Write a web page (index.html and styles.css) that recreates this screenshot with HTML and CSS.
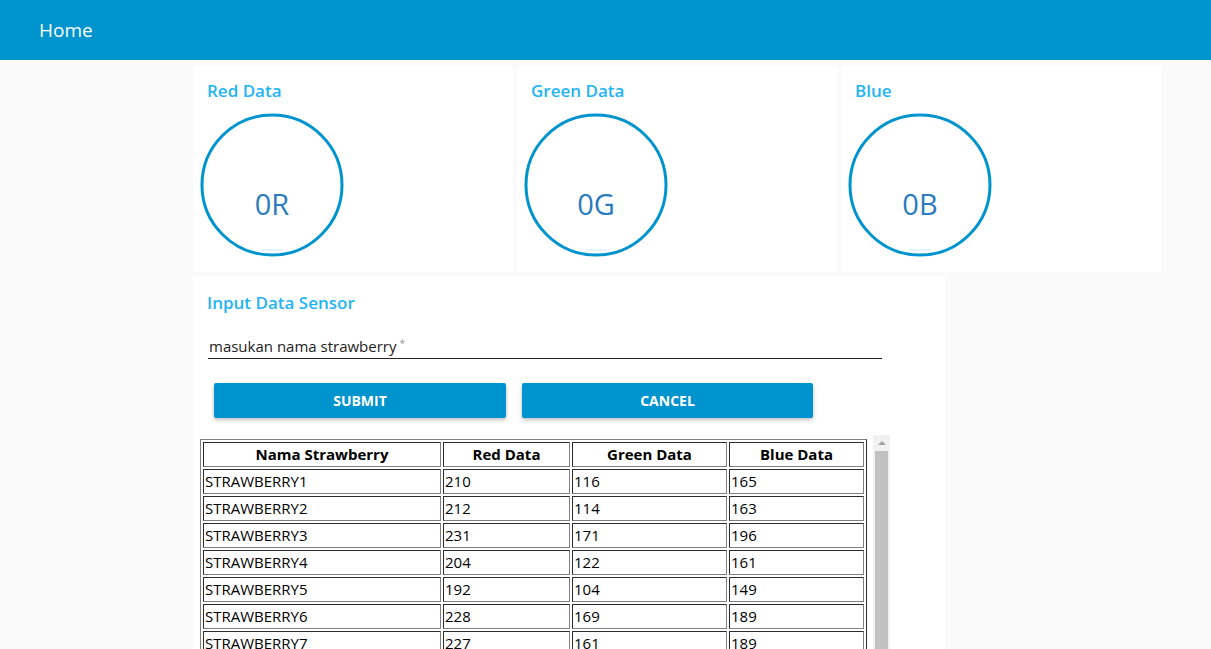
FILE: index.html
```html
<!DOCTYPE html>
<html>
<head>
<meta charset="utf-8">
<title>Home</title>
<link rel="stylesheet" href="styles.css">
</head>
<body>
<header class="topbar"><span class="topbar-title">Home</span></header>
<main class="content">
  <div class="row">
    <section class="card gauge-card">
      <h2 class="card-title">Red Data</h2>
      <div class="gauge">
        <svg class="gauge-svg" width="144" height="144" viewBox="0 0 144 144">
          <circle cx="72" cy="72" r="70" fill="none" stroke="#0094ce" stroke-width="3"/>
          <path d="M61 137.2 Q72 136.6 83 137.2" fill="none" stroke="#d6eef8" stroke-width="1.2"/>
        </svg>
        <span class="gauge-value">0R</span>
      </div>
    </section>
    <section class="card gauge-card">
      <h2 class="card-title">Green Data</h2>
      <div class="gauge">
        <svg class="gauge-svg" width="144" height="144" viewBox="0 0 144 144">
          <circle cx="72" cy="72" r="70" fill="none" stroke="#0094ce" stroke-width="3"/>
          <path d="M61 137.2 Q72 136.6 83 137.2" fill="none" stroke="#d6eef8" stroke-width="1.2"/>
        </svg>
        <span class="gauge-value">0G</span>
      </div>
    </section>
    <section class="card gauge-card">
      <h2 class="card-title">Blue</h2>
      <div class="gauge">
        <svg class="gauge-svg" width="144" height="144" viewBox="0 0 144 144">
          <circle cx="72" cy="72" r="70" fill="none" stroke="#0094ce" stroke-width="3"/>
          <path d="M61 137.2 Q72 136.6 83 137.2" fill="none" stroke="#d6eef8" stroke-width="1.2"/>
        </svg>
        <span class="gauge-value">0B</span>
      </div>
    </section>
  </div>
  <section class="card form-card">
    <h2 class="card-title">Input Data Sensor</h2>
    <div class="field">
      <span class="field-label">masukan nama strawberry</span><span class="field-req">*</span>
    </div>
    <div class="buttons">
      <button class="btn">SUBMIT</button>
      <button class="btn">CANCEL</button>
    </div>
    <div class="table-wrap">
      <div class="table-clip">
        <table class="data-table">
          <colgroup>
            <col class="c1"><col class="c2"><col class="c3"><col class="c4">
          </colgroup>
          <thead>
            <tr><th>Nama Strawberry</th><th>Red Data</th><th>Green Data</th><th>Blue Data</th></tr>
          </thead>
          <tbody>
            <tr><td>STRAWBERRY1</td><td>210</td><td>116</td><td>165</td></tr>
            <tr><td>STRAWBERRY2</td><td>212</td><td>114</td><td>163</td></tr>
            <tr><td>STRAWBERRY3</td><td>231</td><td>171</td><td>196</td></tr>
            <tr><td>STRAWBERRY4</td><td>204</td><td>122</td><td>161</td></tr>
            <tr><td>STRAWBERRY5</td><td>192</td><td>104</td><td>149</td></tr>
            <tr><td>STRAWBERRY6</td><td>228</td><td>169</td><td>189</td></tr>
            <tr><td>STRAWBERRY7</td><td>227</td><td>161</td><td>189</td></tr>
            <tr><td>STRAWBERRY8</td><td>215</td><td>130</td><td>170</td></tr>
          </tbody>
        </table>
      </div>
      <div class="scrollbar">
        <div class="scroll-up"></div>
        <div class="scroll-thumb"></div>
      </div>
    </div>
  </section>
</main>
</body>
</html>
```

FILE: styles.css
```css
* { box-sizing: border-box; }
html, body { margin: 0; padding: 0; height: 100%; overflow: hidden; }
body {
  background: #fafafa;
  font-family: "Open Sans", "Noto Sans", "Liberation Sans", sans-serif;
  color: #000;
}
.topbar {
  height: 60px;
  background: #0094ce;
  display: flex;
  align-items: center;
  padding-left: 39px;
}
.topbar-title {
  color: #fff;
  font-size: 19px;
  line-height: 24px;
}
.content {
  padding: 6px 0 0 193px;
  display: flex;
  flex-direction: column;
  gap: 4px;
}
.row {
  display: flex;
  gap: 4px;
}
.card {
  background: #fff;
}
.card-title {
  margin: 0;
  color: #1fb4f5;
  font-size: 17px;
  font-weight: 600;
  line-height: 22px;
}
.gauge-card {
  width: 320px;
  height: 206px;
  padding: 14px 0 0 14px;
}
.gauge {
  position: relative;
  width: 144px;
  height: 144px;
  margin: 11px 0 0 -7px;
}
.gauge-svg { display: block; }
.gauge-value {
  position: absolute;
  left: 0;
  right: 0;
  top: 73px;
  text-align: center;
  font-size: 29px;
  line-height: 36px;
  color: #2b7bbd;
  font-weight: 400;
}
.form-card {
  width: 752px;
  height: 400px;
  padding: 16px 0 0 0;
}
.form-card .card-title { padding-left: 14px; }
.field {
  margin: 22px 0 0 15px;
  width: 674px;
  border-bottom: 1px solid #222;
  padding: 0 0 2px 1px;
  line-height: 20px;
}
.field-label {
  font-size: 15px;
  color: #222;
}
.field-req {
  font-size: 10px;
  color: #999;
  margin-left: 3px;
  vertical-align: top;
  line-height: 14px;
}
.buttons {
  display: flex;
  gap: 16px;
  margin: 24px 0 0 21px;
}
.btn {
  width: 292px;
  height: 35px;
  background: #0094ce;
  color: #fff;
  border: none;
  border-radius: 2px;
  font-family: inherit;
  font-size: 14px;
  font-weight: 700;
  box-shadow: 0 2px 4px rgba(0,0,0,0.26);
  padding: 0;
}
.btn + .btn { width: 291px; }
.table-wrap {
  display: flex;
  margin: 17px 0 0 7px;
  height: 240px;
  gap: 6px;
}
.table-clip {
  overflow: hidden;
  padding-top: 4px;
}
.data-table {
  table-layout: fixed;
  width: 667px;
  border: 1px outset #808080;
  border-spacing: 2px;
  font-size: 15px;
  line-height: 21px;
}
.data-table col.c1 { width: 238px; }
.data-table col.c2 { width: 127px; }
.data-table col.c3 { width: 155px; }
.data-table col.c4 { width: 135px; }
.data-table th,
.data-table td {
  border: 1px inset #808080;
  padding: 1px;
  white-space: nowrap;
  overflow: hidden;
}
.data-table th {
  font-weight: 700;
  text-align: center;
}
.data-table td { text-align: left; }
.scrollbar {
  width: 17px;
  background: #f1f1f1;
  display: flex;
  flex-direction: column;
  align-items: center;
}
.scroll-up {
  width: 0;
  height: 0;
  margin-top: 6px;
  border-left: 4px solid transparent;
  border-right: 4px solid transparent;
  border-bottom: 4px solid #a3a3a3;
}
.scroll-thumb {
  margin-top: 6px;
  width: 13px;
  flex: 1;
  background: #c1c1c1;
}
```
